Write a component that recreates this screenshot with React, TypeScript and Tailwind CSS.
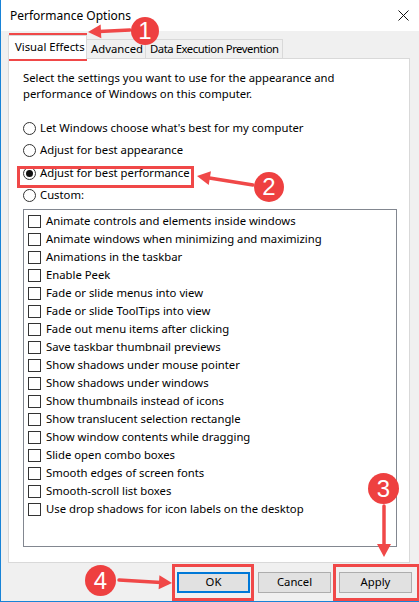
import React from "react";

const RED = "#f04848";

function Arrow({ x1, y1, x2, y2 }: { x1: number; y1: number; x2: number; y2: number }) {
  const dx = x2 - x1;
  const dy = y2 - y1;
  const len = Math.sqrt(dx * dx + dy * dy);
  const ux = dx / len;
  const uy = dy / len;
  const hl = 13;
  const hw = 7;
  const bx = x2 - ux * hl;
  const by = y2 - uy * hl;
  const px = -uy;
  const py = ux;
  const pts = `${x2},${y2} ${bx + px * hw},${by + py * hw} ${bx - px * hw},${by - py * hw}`;
  return (
    <g>
      <line x1={x1} y1={y1} x2={bx + ux * 2} y2={by + uy * 2} stroke={RED} strokeWidth={3.5} strokeLinecap="round" />
      <polygon points={pts} fill={RED} />
    </g>
  );
}

function Badge({ n, cls }: { n: string; cls: string }) {
  return (
    <div
      className={`absolute rounded-full bg-[#ee4040] text-white flex items-center justify-center text-[24px] leading-none ${cls}`}
      style={{ fontFamily: '"Liberation Sans", Arial, sans-serif', fontWeight: 400 }}
    >
      {n}
    </div>
  );
}

const checks = [
  "Animate controls and elements inside windows",
  "Animate windows when minimizing and maximizing",
  "Animations in the taskbar",
  "Enable Peek",
  "Fade or slide menus into view",
  "Fade or slide ToolTips into view",
  "Fade out menu items after clicking",
  "Save taskbar thumbnail previews",
  "Show shadows under mouse pointer",
  "Show shadows under windows",
  "Show thumbnails instead of icons",
  "Show translucent selection rectangle",
  "Show window contents while dragging",
  "Slide open combo boxes",
  "Smooth edges of screen fonts",
  "Smooth-scroll list boxes",
  "Use drop shadows for icon labels on the desktop",
];

function Radio({ label, checked, h }: { label: string; checked?: boolean; h: string }) {
  return (
    <div className={`flex items-center ${h}`}>
      <div className="w-[13px] h-[13px] rounded-full border border-[#333] bg-white flex items-center justify-center shrink-0">
        {checked && <div className="w-[7px] h-[7px] rounded-full bg-[#111]" />}
      </div>
      <span className="ml-[4px] whitespace-nowrap">{label}</span>
    </div>
  );
}

export default function App() {
  return (
    <div
      className="relative w-[419px] h-[602px] bg-[#f0f0f0] border-l border-b border-[#1883d7] overflow-hidden text-black text-[11.3px]"
      style={{ fontFamily: '"Noto Sans", "Open Sans", sans-serif' }}
    >
      <div className="h-[31px] bg-white flex items-center justify-between pl-[9px] pr-[10px]">
        <span className="text-[12px] whitespace-nowrap">Performance Options</span>
        <svg width="11" height="11" viewBox="0 0 11 11">
          <line x1="0.5" y1="0.5" x2="10.5" y2="10.5" stroke="#111" strokeWidth="1" />
          <line x1="10.5" y1="0.5" x2="0.5" y2="10.5" stroke="#111" strokeWidth="1" />
        </svg>
      </div>

      <div className="pl-[7px] pr-[9px] pt-[4px]">
        <div className="flex items-end h-[23px]">
          <div className="relative z-10 h-[24px] -mb-px bg-white border border-b-0 border-[#d9d9d9] pl-[6px] flex items-center w-[79px] whitespace-nowrap">
            Visual Effects
          </div>
          <div className="h-[19px] border border-b-0 border-[#d9d9d9] -ml-px pl-[4px] flex items-center w-[60px] whitespace-nowrap">
            Advanced
          </div>
          <div className="h-[19px] border border-b-0 border-[#d9d9d9] -ml-px pl-[4px] flex items-center w-[138px] whitespace-nowrap tracking-[-0.45px]">
            Data Execution Prevention
          </div>
        </div>
        <div className="h-[505px] bg-white border border-[#d9d9d9] pl-[14px] pt-[11px]">
          <p className="leading-[16px] w-[345px]">
            Select the settings you want to use for the appearance and performance of Windows on this computer.
          </p>
          <div className="mt-[15px]">
            <Radio h="h-[22px]" label="Let Windows choose what's best for my computer" />
            <Radio h="h-[23px]" label="Adjust for best appearance" />
            <Radio h="h-[22px]" label="Adjust for best performance" checked />
            <Radio h="h-[23px]" label="Custom:" />
          </div>
          <div className="mt-[2px] w-[374px] h-[338px] border border-[#828790] pl-[4px] pt-[2px]">
            {checks.map((c) => (
              <div key={c} className="flex items-center h-[18px]">
                <div className="w-[13px] h-[13px] border border-[#333] bg-white shrink-0" />
                <span className="ml-[5px] whitespace-nowrap">{c}</span>
              </div>
            ))}
          </div>
        </div>
      </div>

      <div className="flex justify-end gap-[8px] pr-[7px] mt-[9px]">
        <button className="w-[73px] h-[21px] bg-[#e1e1e1] border-2 border-[#0078d7] flex items-center justify-center">
          OK
        </button>
        <button className="w-[73px] h-[21px] bg-[#e1e1e1] border border-[#adadad] flex items-center justify-center">
          Cancel
        </button>
        <button className="w-[73px] h-[21px] bg-[#e1e1e1] border border-[#adadad] flex items-center justify-center">
          Apply
        </button>
      </div>

      <svg className="absolute left-0 top-0 pointer-events-none" width="419" height="602" viewBox="0 0 419 602">
        <rect x="9.5" y="34.5" width="75" height="25" fill="none" stroke={RED} strokeWidth="3" />
        <rect x="17.5" y="167.5" width="174" height="19" fill="none" stroke={RED} strokeWidth="3" />
        <rect x="172.5" y="565.5" width="79" height="34" fill="none" stroke={RED} strokeWidth="3" />
        <rect x="333.5" y="565.5" width="84" height="34" fill="none" stroke={RED} strokeWidth="3" />
        <Arrow x1={129} y1={30} x2={87} y2={32} />
        <Arrow x1={252} y1={185} x2={196} y2={176} />
        <Arrow x1={383} y1={506} x2={383} y2={557} />
        <Arrow x1={118} y1={580} x2={171} y2={583} />
      </svg>

      <Badge n="1" cls="left-[130px] top-[17px] w-[28px] h-[28px]" />
      <Badge n="2" cls="left-[253px] top-[172px] w-[30px] h-[30px]" />
      <Badge n="3" cls="left-[367px] top-[473px] w-[31px] h-[31px]" />
      <Badge n="4" cls="left-[84px] top-[565px] w-[31px] h-[31px]" />
    </div>
  );
}
